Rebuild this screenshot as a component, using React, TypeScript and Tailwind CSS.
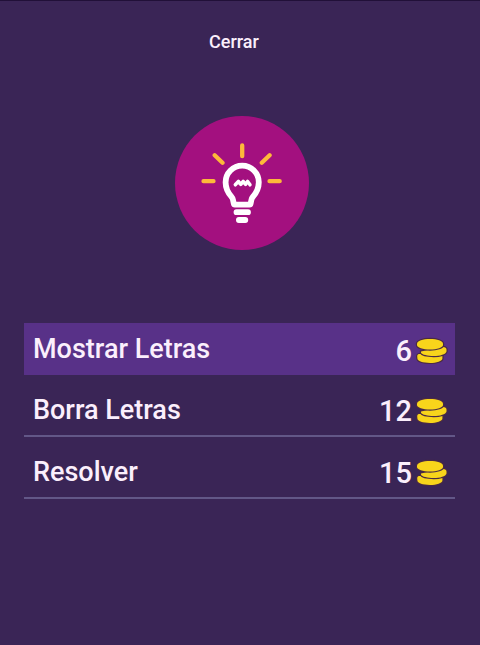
interface Hint {
  label: string;
  cost: number;
  rowClass: string;
}

const hints: Hint[] = [
  { label: 'Mostrar Letras', cost: 6, rowClass: 'h-[52px] bg-[#583188]' },
  { label: 'Borra Letras', cost: 12, rowClass: 'h-[62px] pt-[9px] border-b-2 border-[#625787]' },
  { label: 'Resolver', cost: 15, rowClass: 'h-[62px] pt-[9px] border-b-2 border-[#625787]' },
];

function BulbIcon() {
  return (
    <svg width={134} height={134} viewBox="0 0 134 134" fill="none" strokeLinecap="round" strokeLinejoin="round">
      <circle cx="67" cy="67" r="67" fill="#a3107f" />
      {/* Rays */}
      <path
        d="M67.2 29.5V40.2M28.5 65.2H38.5M94.5 65.2H104.7M39.7 39.3L47.5 46.8M94.6 39.3L86.8 46.8"
        stroke="#fdb93a"
        strokeWidth="4.3"
      />
      {/* Bulb */}
      <path
        d="M59.8 88.6H74.6Q75.4 88.6 75.6 87.7L76.5 83.5Q76.8 82 78.2 80.3C81.5 76.5 83.8 72 83.8 66.2A16.6 16.6 0 0 0 50.6 66.2C50.6 72 52.9 76.5 56.2 80.3Q57.6 82 57.9 83.5L58.8 87.7Q59 88.6 59.8 88.6Z"
        stroke="#fff"
        strokeWidth="5.8"
      />
      <path d="M60.3 68.8L63.4 65.4L65.8 68.4L68.2 65.4L70.6 68.4L72.6 65.4L75 68.8" stroke="#fff" strokeWidth="3.5" />
      <path d="M61.5 96.2H73M63.9 104H70.3" stroke="#fff" strokeWidth="5.8" />
    </svg>
  );
}

function CoinsIcon() {
  return (
    <svg
      width={30}
      height={24}
      viewBox="0 0 30 24"
      fill="#f8d51b"
      stroke="#4a2a45"
      strokeWidth="2.4"
      paintOrder="stroke"
      overflow="visible"
    >
      <path d="M0.2 17.2C0.2 15.3 2 14.8 4.5 15.3L25.4 16.5V19.4C25.4 22 19.5 23.9 13 23.9C6 23.9 0.4 22 0.4 19.5Z" />
      <path d="M4 12.4L24 8.2C27.5 7.4 29.5 8.7 29.5 10.5V12.4C28.8 15.2 23 17 16.8 17C10.5 17 5 15.8 4 13.8Z" />
      <path d="M0 4.8C0 2 6 0 13 0C20 0 26 2 26 4.8V6C26 8.6 20 10.5 13 10.5C6 10.5 0 8.6 0 6Z" />
    </svg>
  );
}

export default function App() {
  return (
    <div className="flex h-[645px] w-[480px] flex-col border-t border-[#211038] bg-[#3a2556] font-['Roboto',sans-serif] font-medium text-[#fbeffc]">
      <header className="flex h-[114px] justify-center pt-[29px] pr-[12px]">
        <button type="button" className="h-6 text-[18px] leading-6">
          Cerrar
        </button>
      </header>

      <div className="flex h-[208px] justify-center pt-[0.5px] pl-[3px]">
        <BulbIcon />
      </div>

      <ul className="ml-6 w-[431px]">
        {hints.map(({ label, cost, rowClass }) => (
          <li key={label} className={`flex items-center justify-between pr-2 pl-[9px] ${rowClass}`}>
            <span className="text-[27px] leading-8">{label}</span>
            <span className="flex items-center gap-[5px] pt-[3px] text-[29px] leading-8">
              {cost}
              <CoinsIcon />
            </span>
          </li>
        ))}
      </ul>
    </div>
  );
}
